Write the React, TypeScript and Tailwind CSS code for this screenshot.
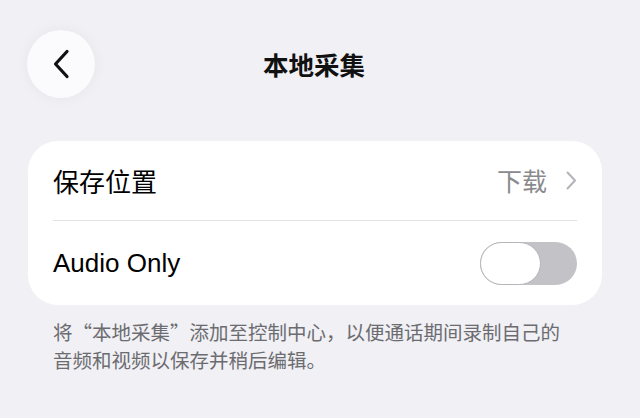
import React, { useState } from 'react';

const font = { fontFamily: '"Liberation Sans", "Noto Sans CJK SC", sans-serif' };
const cjk = { fontFamily: '"Noto Sans CJK SC", sans-serif' };

const App: React.FC = () => {
  const [audioOnly, setAudioOnly] = useState(false);

  return (
    <div className="w-[640px] h-[418px] overflow-hidden bg-[#f0f0f5]" style={font}>
      {/* header */}
      <div className="flex items-center pl-[27px] pt-[30px]">
        <button className="w-[68px] h-[68px] rounded-full bg-[#fbfbfd] shadow-[0_0_14px_rgba(0,0,30,0.05)] flex items-center justify-center">
          <svg width="18" height="30" viewBox="0 0 18 30" fill="none">
            <path d="M15 2.5L3.5 15L15 27.5" stroke="#111" strokeWidth="3.2" strokeLinecap="round" strokeLinejoin="round" />
          </svg>
        </button>
        <h1 className="ml-[168px] text-[25.5px] font-semibold text-[#111] leading-none" style={cjk}>
          本地采集
        </h1>
      </div>

      {/* card */}
      <div className="mt-[43px] mx-[28px] w-[574px] rounded-[30px] bg-white">
        <div className="h-[79px] px-[25px] flex items-center justify-between">
          <span className="text-[26px] text-black" style={cjk}>保存位置</span>
          <div className="flex items-center gap-[19px]">
            <span className="text-[25px] text-[#8a8a8e]" style={cjk}>下载</span>
            <svg width="11" height="19" viewBox="0 0 11 19" fill="none">
              <path d="M1.5 1.5L9 9.5L1.5 17.5" stroke="#b3b3b8" strokeWidth="2" strokeLinecap="round" strokeLinejoin="round" />
            </svg>
          </div>
        </div>
        <div className="mx-[25px] h-px bg-[#e3e3e7]" />
        <div className="h-[84px] px-[25px] flex items-center justify-between">
          <span className="text-[26px] text-black">Audio Only</span>
          <button
            onClick={() => setAudioOnly(!audioOnly)}
            className={`w-[97px] h-[43px] rounded-full flex items-center ${
              audioOnly ? 'bg-[#34c759] justify-end' : 'bg-[#c3c3c7] justify-start'
            }`}
          >
            <span className="w-[61px] h-[43px] rounded-full bg-white border-[1.5px] border-[#b5b5b9]" />
          </button>
        </div>
      </div>

      {/* footer */}
      <p className="mt-[13px] px-[53px] text-[19.5px] leading-[28px] text-[#6c6c70]" style={cjk}>
        将“本地采集”添加至控制中心，以便通话期间录制自己的
        <br />
        音频和视频以保存并稍后编辑。
      </p>
    </div>
  );
};

export default App;
